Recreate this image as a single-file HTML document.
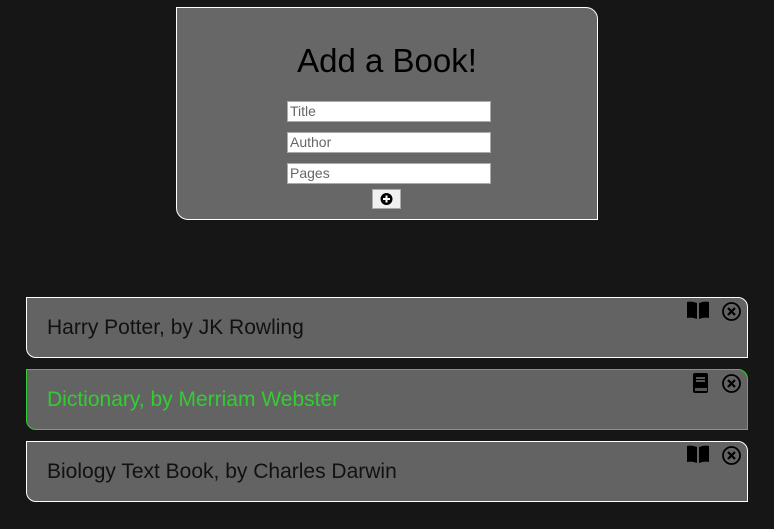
<html><head><style>
body{margin:0;background:#161616;width:774px;height:529px;position:relative;font-family:"Liberation Sans",sans-serif;overflow:hidden}
.form{position:absolute;left:176px;top:7px;width:420px;height:211px;background:#676767;border:1px solid #fff;border-radius:0 12px 0 12px}
h1{position:absolute;left:0;right:0;top:34px;margin:0;text-align:center;font-weight:normal;font-size:33px;color:#000}
.in{position:absolute;left:110px;width:200px;height:19px;background:#fff;border:1px solid #aaa;font-size:14px;color:#666;line-height:19px;padding-left:2px;box-sizing:content-box}
.btn{position:absolute;left:195px;top:181px;width:27px;height:18px;background:#f0f0f0;border:1px solid #aaa}
.card{position:absolute;left:26px;width:720px;height:59px;background:#636363;border:1px solid #fff;border-radius:0 10px 0 10px}
.card span{position:absolute;left:20px;top:18px;font-size:21px;color:#111}
.ic{position:absolute;top:3px}
</style></head><body>
<div class="form"><h1>Add a Book!</h1>
<div class="in" style="top:93px">Title</div>
<div class="in" style="top:124px">Author</div>
<div class="in" style="top:155px">Pages</div>
<div class="btn"><svg width="27" height="18" viewBox="0 0 27 18"><circle cx="13.5" cy="9" r="6" fill="#000"/><path d="M13.5 5.5v7M10 9h7" stroke="#fff" stroke-width="2"/></svg></div>
</div>
<div class="card" style="top:297px"><span>Harry Potter, by JK Rowling</span>
<svg class="ic" style="left:659px" width="24" height="18" viewBox="0 0 24 18"><path d="M1 1q5-1 10 1v16q-5-2-10-1zM13 2q5-2 10-1v16q-5-1-10 1z" fill="#000"/></svg>
<svg class="ic" style="left:694px" width="21" height="21" viewBox="0 0 21 21"><circle cx="10.5" cy="10.5" r="8.5" fill="none" stroke="#000" stroke-width="1.8"/><path d="M7 7l7 7M14 7l-7 7" stroke="#000" stroke-width="2.2"/></svg></div>
<div class="card" style="top:369px;border-color:#3c3"><span style="color:#3c3">Dictionary, by Merriam Webster</span>
<svg class="ic" style="left:665px" width="17" height="20" viewBox="0 0 17 20"><rect x="1" y="0" width="15" height="20" rx="2" fill="#000"/><path d="M4 5h9M4 8h9" stroke="#777" stroke-width="1.5"/><rect x="3" y="15" width="12" height="3" fill="#555"/></svg>
<svg class="ic" style="left:694px" width="21" height="21" viewBox="0 0 21 21"><circle cx="10.5" cy="10.5" r="8.5" fill="none" stroke="#000" stroke-width="1.8"/><path d="M7 7l7 7M14 7l-7 7" stroke="#000" stroke-width="2.2"/></svg></div>
<div class="card" style="top:441px"><span>Biology Text Book, by Charles Darwin</span>
<svg class="ic" style="left:659px" width="24" height="18" viewBox="0 0 24 18"><path d="M1 1q5-1 10 1v16q-5-2-10-1zM13 2q5-2 10-1v16q-5-1-10 1z" fill="#000"/></svg>
<svg class="ic" style="left:694px" width="21" height="21" viewBox="0 0 21 21"><circle cx="10.5" cy="10.5" r="8.5" fill="none" stroke="#000" stroke-width="1.8"/><path d="M7 7l7 7M14 7l-7 7" stroke="#000" stroke-width="2.2"/></svg></div>
</body></html>
